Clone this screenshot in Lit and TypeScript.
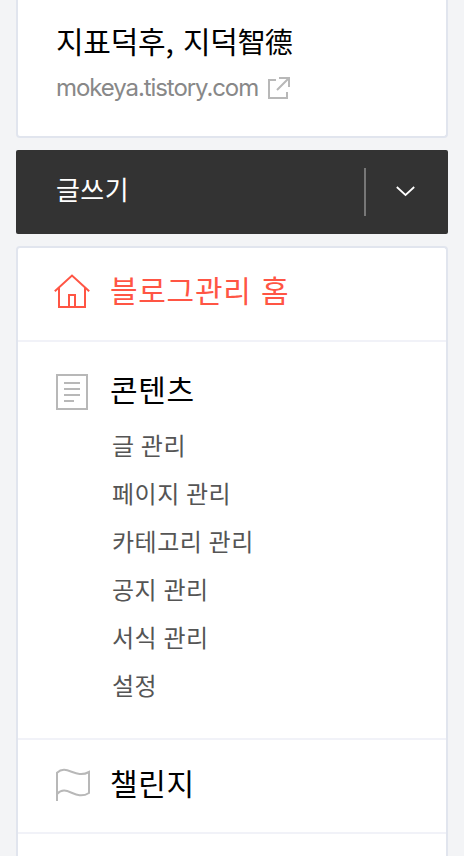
import { LitElement, html, css, svg } from "lit";
import { customElement } from "lit/decorators.js";

const contentItems = ["글 관리", "페이지 관리", "카테고리 관리", "공지 관리", "서식 관리", "설정"];

const icons = {
  external: svg`<path d="M8 3H1V21H19V15" /><path d="M11 1H21V10M20.5 1.5L9 13" />`,
  chevron: svg`<path d="M.8 1L9.5 9L18.2 1" />`,
  home: svg`<path d="M.8 17.2L18 1.6L35.2 17.2" /><path d="M5 13.5V33H31V13.5" /><path d="M15 33V21H21V33" />`,
  document: svg`<path d="M1 1H31V35H1Z" /><path d="M8 9H24M8 15H24M8 21H24M8 27H18" />`,
  flag: svg`<path d="M1 33V4.7C11-4.5 19 11.5 33 4V25C19 33.5 11 15.5 1 26" />`,
};

@customElement("app-root")
export class AppRoot extends LitElement {
  static styles = css`
    :host {
      display: block;
      box-sizing: border-box;
      height: 856px;
      overflow: hidden;
      padding: 0 16px;
      background: #f3f4f6;
      font-family: "Noto Sans CJK KR", "Noto Sans", sans-serif;
      color: #000;
    }
    * {
      box-sizing: border-box;
    }
    svg {
      display: block;
      flex: none;
      fill: none;
      stroke: #b8b8b8;
      stroke-width: 2;
    }
    .card {
      background: #fff;
      border: 2px solid #e1e5ee;
    }
    .blog {
      height: 138px;
      padding: 19px 38px 0;
      border-top: 0;
      border-radius: 0 0 4px 4px;
    }
    .name {
      height: 45px;
      font-size: 30px;
      line-height: 42px;
      letter-spacing: -0.25px;
      word-spacing: 3px;
      white-space: nowrap;
    }
    .hanja {
      font-size: 28px;
      letter-spacing: -0.8px;
    }
    .address {
      display: flex;
      align-items: center;
      gap: 10px;
      height: 48px;
      color: #888;
      font-family: Inter, sans-serif;
      font-size: 24px;
      letter-spacing: -1.08px;
    }
    .url {
      width: 202px;
      margin-top: -2px;
      white-space: nowrap;
    }
    .write {
      display: flex;
      align-items: center;
      height: 84px;
      margin: 12px 0;
      padding-left: 40px;
      border-radius: 2px;
      background: #333;
      color: #fff;
      font-size: 26px;
      line-height: 78px;
      letter-spacing: 0.4px;
    }
    .label {
      flex: 1;
      height: 84px;
    }
    .toggle {
      display: flex;
      align-items: center;
      width: 84px;
      height: 48px;
      padding: 0 0 2px 29.5px;
      border-left: 2px solid #777;
    }
    .toggle svg {
      stroke: #fff;
      stroke-width: 1.7;
    }
    .menu {
      height: 640px;
      border-bottom: 0;
      border-radius: 4px 4px 0 0;
    }
    .section {
      padding: 0 36px;
      border-bottom: 2px solid #f1f2f8;
    }
    .heading {
      display: flex;
      align-items: center;
      height: 92px;
      font-size: 30px;
      line-height: 44px;
      letter-spacing: 0.7px;
      word-spacing: 2px;
    }
    .slot {
      width: 56px;
      flex: none;
    }
    .document,
    .flag {
      padding-left: 2px;
    }
    .text {
      margin-top: -8px;
    }
    .flag {
      margin-top: -2px;
    }
    .home {
      color: #ff5544;
    }
    .home .slot {
      margin-top: -6px;
    }
    .home .text {
      margin-top: -10px;
    }
    .home svg {
      stroke: #ff5544;
    }
    .contents {
      height: 398px;
      padding-top: 4px;
    }
    .items {
      margin: -17px 0 0;
      padding: 0 0 0 58px;
      list-style: none;
      color: #555;
      font-size: 24px;
      line-height: 48px;
      letter-spacing: 0.5px;
      word-spacing: 0.4px;
    }
  `;

  private icon(name: keyof typeof icons, width: number, height: number) {
    return html`<svg width=${width} height=${height} viewBox="0 0 ${width} ${height}">${icons[name]}</svg>`;
  }

  private heading(name: "home" | "document" | "flag", label: string, width: number, height: number) {
    return html`<div class="heading ${name === "home" ? "home" : ""}">
      <span class="slot ${name === "home" ? "" : name}">${this.icon(name, width, height)}</span>
      <span class="text">${label}</span>
    </div>`;
  }

  render() {
    return html`
      <header class="card blog">
        <div class="name">지표덕후, 지덕<span class="hanja">智德</span></div>
        <div class="address"><span class="url">mokeya.tistory.com</span>${this.icon("external", 22, 22)}</div>
      </header>
      <div class="write">
        <span class="label">글쓰기</span>
        <span class="toggle">${this.icon("chevron", 19, 11)}</span>
      </div>
      <nav class="card menu">
        <div class="section">${this.heading("home", "블로그관리 홈", 36, 34)}</div>
        <div class="section contents">
          ${this.heading("document", "콘텐츠", 32, 36)}
          <ul class="items">
            ${contentItems.map((item) => html`<li>${item}</li>`)}
          </ul>
        </div>
        <div class="section">${this.heading("flag", "챌린지", 34, 34)}</div>
      </nav>
    `;
  }
}
